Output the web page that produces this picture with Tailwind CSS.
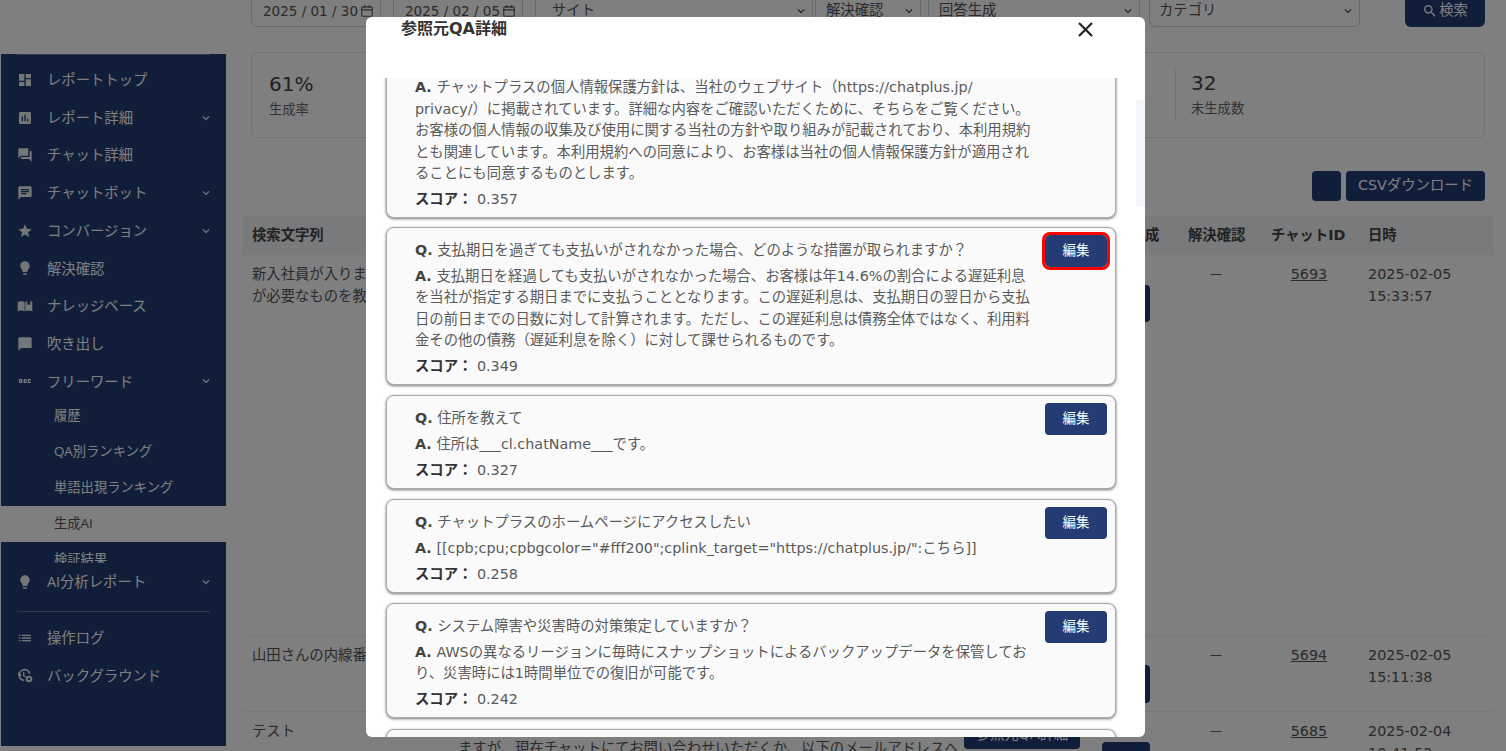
<!DOCTYPE html>
<html lang="ja">
<head>
<meta charset="utf-8">
<script src="https://cdn.jsdelivr.net/npm/@tailwindcss/browser@4"></script>
</head>
<body class="bg-white">
<div class="relative w-[1506px] h-[751px] overflow-hidden bg-white flex font-['DejaVu_Sans','Noto_Sans_CJK_JP',sans-serif] text-[14.35px] text-[#555]">

  <!-- sidebar -->
  <aside class="mt-[54px] ml-[1px] w-[225px] h-[692px] shrink-0 bg-[#203c74] text-white overflow-hidden font-['Open_Sans','Noto_Sans_CJK_JP',sans-serif]">
    <div class="h-px mx-4 bg-white/30"></div>
    <nav class="pt-[6px]">
      <div class="h-[37.7px] flex items-center pl-[16px] pr-[13px]"><svg class="w-[16px] h-[16px] fill-white/90" viewBox="0 0 24 24"><path d="M3 13h8V3H3v10zm0 8h8v-6H3v6zm10 0h8V11h-8v10zm0-18v6h8V3h-8z"/></svg><span class="ml-[14px] flex-1">レポートトップ</span></div>
      <div class="h-[37.7px] flex items-center pl-[16px] pr-[13px]"><svg class="w-[16px] h-[16px] fill-white/90" viewBox="0 0 24 24"><path d="M19 3H5c-1.1 0-2 .9-2 2v14c0 1.1.9 2 2 2h14c1.1 0 2-.9 2-2V5c0-1.1-.9-2-2-2zM9 17H7v-7h2v7zm4 0h-2V7h2v10zm4 0h-2v-4h2v4z"/></svg><span class="ml-[14px] flex-1">レポート詳細</span><svg class="w-[14px] h-[14px] fill-white" viewBox="0 0 24 24"><path d="M16.59 8.59L12 13.17 7.41 8.59 6 10l6 6 6-6z"/></svg></div>
      <div class="h-[37.7px] flex items-center pl-[16px] pr-[13px]"><svg class="w-[16px] h-[16px] fill-white/90" viewBox="0 0 24 24"><path d="M21 6h-2v9H6v2c0 .55.45 1 1 1h11l4 4V7c0-.55-.45-1-1-1zm-4 6V3c0-.55-.45-1-1-1H3c-.55 0-1 .45-1 1v14l4-4h10c.55 0 1-.45 1-1z"/></svg><span class="ml-[14px] flex-1">チャット詳細</span></div>
      <div class="h-[37.7px] flex items-center pl-[16px] pr-[13px]"><svg class="w-[16px] h-[16px] fill-white/90" viewBox="0 0 24 24"><path d="M20 2H4c-1.1 0-1.99.9-1.99 2L2 22l4-4h14c1.1 0 2-.9 2-2V4c0-1.1-.9-2-2-2zM6 9h12v2H6V9zm8 5H6v-2h8v2zm4-6H6V6h12v2z"/></svg><span class="ml-[14px] flex-1">チャットボット</span><svg class="w-[14px] h-[14px] fill-white" viewBox="0 0 24 24"><path d="M16.59 8.59L12 13.17 7.41 8.59 6 10l6 6 6-6z"/></svg></div>
      <div class="h-[37.7px] flex items-center pl-[16px] pr-[13px]"><svg class="w-[16px] h-[16px] fill-white/90" viewBox="0 0 24 24"><path d="M12 17.27L18.18 21l-1.64-7.03L22 9.24l-7.19-.61L12 2 9.19 8.63 2 9.24l5.46 4.73L5.82 21z"/></svg><span class="ml-[14px] flex-1">コンバージョン</span><svg class="w-[14px] h-[14px] fill-white" viewBox="0 0 24 24"><path d="M16.59 8.59L12 13.17 7.41 8.59 6 10l6 6 6-6z"/></svg></div>
      <div class="h-[37.7px] flex items-center pl-[16px] pr-[13px]"><svg class="w-[16px] h-[16px] fill-white/90" viewBox="0 0 24 24"><path d="M9 21c0 .55.45 1 1 1h4c.55 0 1-.45 1-1v-1H9v1zm3-19C8.14 2 5 5.14 5 9c0 2.38 1.19 4.47 3 5.74V17c0 .55.45 1 1 1h6c.55 0 1-.45 1-1v-2.26c1.81-1.27 3-3.36 3-5.74 0-3.86-3.14-7-7-7z"/></svg><span class="ml-[14px] flex-1">解決確認</span></div>
      <div class="h-[37.7px] flex items-center pl-[16px] pr-[13px]"><svg class="w-[16px] h-[16px] fill-white/90" viewBox="0 0 24 24"><path d="M1 6.5C2.5 5.4 4.5 5 6.5 5S10.500 5.400 11.500 6.500V20c-1.500-1-3.200-1.300-5-1.300-1.900 0-3.800.4-5.500 1.300zM12.500 6.500c.8-.8 1.700-1.200 3-1.500v6l2.300-1.800L20 11V3.500l3 3V20c-1.700-.9-3.600-1.300-5.500-1.300-1.800 0-3.500.3-5 1.300z"/></svg><span class="ml-[14px] flex-1">ナレッジベース</span></div>
      <div class="h-[37.7px] flex items-center pl-[16px] pr-[13px]"><svg class="w-[16px] h-[16px] fill-white/90" viewBox="0 0 24 24"><path d="M20 2H4c-1.1 0-2 .9-2 2v18l4-4h14c1.100 0 2-.9 2-2V4c0-1.100-.9-2-2-2z"/></svg><span class="ml-[14px] flex-1">吹き出し</span></div>
      <div class="h-[37.7px] flex items-center pl-[16px] pr-[13px]"><svg class="w-[16px] h-[16px] fill-white/90" viewBox="0 0 24 24"><path d="M3 9h5v6H3zM5 11v2h1v-2zM10 9h4.500v6H10zM12 11v2h1v-2zM16 9h5v2h-3v2h3v2h-5z" fill-rule="evenodd"/></svg><span class="ml-[14px] flex-1">フリーワード</span><svg class="w-[14px] h-[14px] fill-white" viewBox="0 0 24 24"><path d="M16.59 8.59L12 13.17 7.41 8.59 6 10l6 6 6-6z"/></svg></div>
    </nav>
    <div class="h-[165px] -mt-[2px] overflow-hidden text-[13.3px]">
      <div class="h-[36px] flex items-center pl-[53px]">履歴</div>
      <div class="h-[36px] flex items-center pl-[53px]">QA別ランキング</div>
      <div class="h-[36px] flex items-center pl-[53px]">単語出現ランキング</div>
      <div class="h-[36px] flex items-center pl-[53px] bg-white text-[#555]">生成AI</div>
      <div class="h-[36px] flex items-center pl-[53px]">検証結果</div>
    </div>
    <div class="h-[37.7px] flex items-center pl-[16px] pr-[13px]"><svg class="w-[16px] h-[16px] fill-white/90" viewBox="0 0 24 24"><path d="M9 21c0 .55.45 1 1 1h4c.55 0 1-.45 1-1v-1H9v1zm3-19C8.14 2 5 5.14 5 9c0 2.38 1.19 4.47 3 5.74V17c0 .55.45 1 1 1h6c.55 0 1-.45 1-1v-2.26c1.81-1.27 3-3.36 3-5.74 0-3.86-3.14-7-7-7z"/></svg><span class="ml-[14px] flex-1">AI分析レポート</span><svg class="w-[14px] h-[14px] fill-white" viewBox="0 0 24 24"><path d="M16.59 8.59L12 13.17 7.41 8.59 6 10l6 6 6-6z"/></svg></div>
    <div class="h-px mx-4 mt-[10px] bg-white/30"></div>
    <div class="mt-[7px] h-[37.7px] flex items-center pl-[16px] pr-[13px]"><svg class="w-[16px] h-[16px] fill-white/90" viewBox="0 0 24 24"><path d="M3 13h2v-2H3v2zm0 4h2v-2H3v2zm0-8h2V7H3v2zm4 4h14v-2H7v2zm0 4h14v-2H7v2zM7 7v2h14V7H7z"/></svg><span class="ml-[14px] flex-1">操作ログ</span></div>
    <div class="h-[37.7px] flex items-center pl-[16px] pr-[13px]"><svg class="w-[16px] h-[16px]" viewBox="0 0 24 24"><path d="M19 10A8 8 0 1 0 11 20" fill="none" stroke="rgb(255 255 255 / .9)" stroke-width="2.500"/><path d="M2 7V13H8z" class="fill-white/90"/><path d="M10 7v6l3 2" fill="none" stroke="rgb(255 255 255 / .9)" stroke-width="2"/><circle cx="18" cy="18" r="3.500" fill="none" stroke="rgb(255 255 255 / .9)" stroke-width="3"/></svg><span class="ml-[14px] flex-1">バックグラウンド</span></div>
  </aside>

  <!-- main -->
  <main class="ml-[17px] w-[1250px] shrink-0">
    <div class="h-[27px] overflow-hidden">
      <div class="-mt-[5px] h-[32px] ml-[8px] flex">
        <div class="w-[130px] h-full border border-[#ced4da] rounded-md flex items-center pl-[11px] pr-[6px] justify-between text-[13.5px]"><span>2025 / 01 / 30</span><svg class="w-[14px] h-[14px] fill-none stroke-[#555] stroke-2" viewBox="0 0 24 24"><rect x="3" y="5" width="18" height="16" rx="2"/><path d="M3 10h18M8 2v5M16 2v5"/></svg></div>
        <div class="w-[130px] ml-[12px] h-full border border-[#ced4da] rounded-md flex items-center pl-[11px] pr-[6px] justify-between text-[13.5px]"><span>2025 / 02 / 05</span><svg class="w-[14px] h-[14px] fill-none stroke-[#555] stroke-2" viewBox="0 0 24 24"><rect x="3" y="5" width="18" height="16" rx="2"/><path d="M3 10h18M8 2v5M16 2v5"/></svg></div>
        <div class="w-[278px] ml-[12px] h-full border border-[#ced4da] rounded-md flex items-center pl-[16px] pr-[4px] justify-between"><span>サイト</span><svg class="w-[14px] h-[14px] fill-[#333]" viewBox="0 0 24 24"><path d="M16.59 8.59L12 13.17 7.41 8.59 6 10l6 6 6-6z"/></svg></div>
        <div class="w-[106px] ml-[2px] h-full border border-[#ced4da] rounded-md flex items-center pl-[10px] pr-[4px] justify-between"><span>解決確認</span><svg class="w-[14px] h-[14px] fill-[#333]" viewBox="0 0 24 24"><path d="M16.59 8.59L12 13.17 7.41 8.59 6 10l6 6 6-6z"/></svg></div>
        <div class="w-[212px] ml-[7px] h-full border border-[#ced4da] rounded-md flex items-center pl-[10px] pr-[4px] justify-between"><span>回答生成</span><svg class="w-[14px] h-[14px] fill-[#333]" viewBox="0 0 24 24"><path d="M16.59 8.59L12 13.17 7.41 8.59 6 10l6 6 6-6z"/></svg></div>
        <div class="w-[211px] ml-[9px] h-full border border-[#ced4da] rounded-md flex items-center pl-[9px] pr-[4px] justify-between"><span>カテゴリ</span><svg class="w-[14px] h-[14px] fill-[#333]" viewBox="0 0 24 24"><path d="M16.59 8.59L12 13.17 7.41 8.59 6 10l6 6 6-6z"/></svg></div>
        <div class="w-[80px] ml-[45px] h-full bg-[#203c74] rounded-md flex items-center justify-center text-white"><svg class="w-[16px] h-[16px] fill-white" viewBox="0 0 24 24"><path d="M15.5 14h-.79l-.28-.27C15.41 12.59 16 11.11 16 9.5 16 5.91 13.09 3 9.5 3S3 5.91 3 9.5 5.91 16 9.5 16c1.61 0 3.09-.59 4.23-1.57l.27.28v.79l5 4.99L20.49 19l-4.99-5zm-6 0C7.01 14 5 11.99 5 9.5S7.01 5 9.5 5 14 7.01 14 9.500 11.990 14 9.500 14z"/></svg><span class="ml-[1px]">検索</span></div>
      </div>
    </div>

    <section class="mt-[25px] ml-[8px] w-[1234px] h-[86px] border border-[#e4e6ea] rounded-md flex items-center justify-between">
      <div class="pl-[17px]">
        <div class="text-[20px] leading-[28px] text-[#444]">61%</div>
        <div class="mt-[2px] text-[13.3px] leading-[20px] text-[#666]">生成率</div>
      </div>
      <div class="w-[309px] h-[53px] border-l border-[#e4e6ea] pl-[15px]">
        <div class="text-[20px] leading-[28px] text-[#444]">32</div>
        <div class="mt-[2px] text-[13.3px] leading-[20px] text-[#666]">未生成数</div>
      </div>
    </section>

    <div class="mt-[33px] w-[1242px] h-[30px] flex justify-end gap-[5px]">
      <div class="w-[29px] h-full bg-[#203c74] rounded-[4px]"></div>
      <div class="w-[139px] h-full bg-[#203c74] rounded-[4px] text-white flex items-center justify-center">CSVダウンロード</div>
    </div>

    <section class="mt-[15px] w-[1250px]">
      <div class="h-[39px] bg-[#f3f4f7] pl-[9px] grid grid-cols-[206px_506px_138px_86px_83px_97px_1fr] items-center font-bold text-[#444]">
        <div>検索文字列</div><div></div><div></div><div>回答生成</div><div>解決確認</div><div>チャットID</div><div>日時</div>
      </div>
      <div class="h-[381px] border-b border-[#eee] pl-[9px] grid grid-cols-[206px_506px_138px_86px_83px_97px_1fr] leading-[21.500px] pt-[9px]">
        <div>新入社員が入りますが、入社に<br>が必要なものを教えてください</div><div></div><div></div>
        <div class="pt-[21px]"><div class="w-[48px] h-[37px] bg-[#203c74] rounded-[4px]"></div></div>
        <div class="w-[56px] text-center text-[12px]">—</div>
        <div class="w-[76px] text-center underline">5693</div>
        <div>2025-02-05<br>15:33:57</div>
      </div>
      <div class="h-[76px] border-b border-[#eee] pl-[9px] grid grid-cols-[206px_506px_138px_86px_83px_97px_1fr] leading-[21.500px] pt-[9px]">
        <div class="whitespace-nowrap">山田さんの内線番号を教えて</div><div></div><div></div>
        <div class="pt-[20px]"><div class="w-[48px] h-[38px] bg-[#203c74] rounded-[4px]"></div></div>
        <div class="w-[56px] text-center text-[12px]">—</div>
        <div class="w-[76px] text-center underline">5694</div>
        <div>2025-02-05<br>15:11:38</div>
      </div>
      <div class="h-[60px] pl-[9px] grid grid-cols-[206px_506px_138px_86px_83px_97px_1fr] leading-[21.500px] pt-[9px]">
        <div>テスト</div>
        <div class="whitespace-nowrap overflow-hidden -mt-[5px]">お問い合わせの内容については確認が必要となり<br>ますが、現在チャットにてお問い合わせいただくか、以下のメールアドレスへ</div>
        <div><div class="w-[116px] h-[30px] -mt-[2px] bg-[#203c74] rounded-[4px] text-white text-center leading-[30px]">参照元QA詳細</div></div>
        <div class="pt-[21px]"><div class="w-[48px] h-[38px] bg-[#203c74] rounded-[4px]"></div></div>
        <div class="w-[56px] text-center text-[12px]">—</div>
        <div class="w-[76px] text-center underline">5685</div>
        <div>2025-02-04<br>10:41:52</div>
      </div>
    </section>
  </main>

  <!-- overlay -->
  <div class="absolute inset-0 bg-black/50"></div>

  <!-- modal -->
  <div class="absolute left-[366px] top-[17px] w-[779px] h-[720px] bg-white rounded-md flex flex-col overflow-hidden">
    <header class="h-[61px] shrink-0 flex justify-between items-start pl-[35px] pr-[52px]">
      <h2 class="text-[16px] leading-[24px] font-bold text-[#333]">参照元QA詳細</h2>
      <svg class="w-[15px] h-[15px] mt-[5px] stroke-[#222] stroke-[2.200] fill-none" viewBox="0 0 15 15"><path d="M1 1l13 13M14 1L1 14"/></svg>
    </header>
    <div class="absolute right-0 top-[83px] w-[9px] h-[106px] bg-[#f3f6fb]"></div>
    <div class="flex-1 overflow-hidden pl-[20px] pr-[29px] leading-[21.500px] text-[#5a5a5a]">
      <div class="-mt-[40px] flex flex-col gap-[10px]">

        <article class="-mb-[1px] border border-[#aaa] rounded-lg bg-[#fafafa] shadow-[0_1px_3px_rgba(0,0,0,0.55)] pl-[28px] pr-[8px] pt-[12px] pb-[6.250px]">
          <p><b class="text-[#444]">Q.</b> 個人情報の取り扱いについて教えてください</p>
          <p class="mt-[4.500px]"><b class="text-[#444]">A.</b> チャットプラスの個人情報保護方針は、当社のウェブサイト（https://chatplus.jp/<br>privacy/）に掲載されています。詳細な内容をご確認いただくために、そちらをご覧ください。<br>お客様の個人情報の収集及び使用に関する当社の方針や取り組みが記載されており、本利用規約<br>とも関連しています。本利用規約への同意により、お客様は当社の個人情報保護方針が適用され<br>ることにも同意するものとします。</p>
          <p class="mt-[4.500px]"><b class="text-[#333]">スコア：</b> <span>0.357</span></p>
        </article>

        <article class="border border-[#aaa] rounded-lg bg-[#fafafa] shadow-[0_1px_3px_rgba(0,0,0,0.55)] pl-[28px] pr-[8px] pt-[12px] pb-[6.250px] flex justify-between items-start">
          <div>
            <p><b class="text-[#444]">Q.</b> 支払期日を過ぎても支払いがされなかった場合、どのような措置が取られますか？</p>
            <p class="mt-[4.500px]"><b class="text-[#444]">A.</b> 支払期日を経過しても支払いがされなかった場合、お客様は年14.6%の割合による遅延利息<br>を当社が指定する期日までに支払うこととなります。この遅延利息は、支払期日の翌日から支払<br>日の前日までの日数に対して計算されます。ただし、この遅延利息は債務全体ではなく、利用料<br>金その他の債務（遅延利息を除く）に対して課せられるものです。</p>
            <p class="mt-[4.500px]"><b class="text-[#333]">スコア：</b> <span>0.349</span></p>
          </div>
          <div class="-mt-[5px] w-[62px] h-[32px] bg-[#243c73] rounded-[5px] text-white text-[13.5px] flex items-center justify-center outline-[3px] outline-[#f00]">編集</div>
        </article>

        <article class="border border-[#aaa] rounded-lg bg-[#fafafa] shadow-[0_1px_3px_rgba(0,0,0,0.55)] pl-[28px] pr-[8px] pt-[12px] pb-[6.250px] flex justify-between items-start">
          <div>
            <p><b class="text-[#444]">Q.</b> 住所を教えて</p>
            <p class="mt-[4.500px]"><b class="text-[#444]">A.</b> 住所は___cl.chatName___です。</p>
            <p class="mt-[4.500px]"><b class="text-[#333]">スコア：</b> <span>0.327</span></p>
          </div>
          <div class="-mt-[5px] w-[62px] h-[32px] bg-[#243c73] rounded-[4px] text-white text-[13.5px] flex items-center justify-center">編集</div>
        </article>

        <article class="border border-[#aaa] rounded-lg bg-[#fafafa] shadow-[0_1px_3px_rgba(0,0,0,0.55)] pl-[28px] pr-[8px] pt-[12px] pb-[6.250px] flex justify-between items-start">
          <div>
            <p><b class="text-[#444]">Q.</b> チャットプラスのホームページにアクセスしたい</p>
            <p class="mt-[4.500px]"><b class="text-[#444]">A.</b> [[cpb;cpu;cpbgcolor="#fff200";cplink_target="https://chatplus.jp/":こちら]]</p>
            <p class="mt-[4.500px]"><b class="text-[#333]">スコア：</b> <span>0.258</span></p>
          </div>
          <div class="-mt-[5px] w-[62px] h-[32px] bg-[#243c73] rounded-[4px] text-white text-[13.5px] flex items-center justify-center">編集</div>
        </article>

        <article class="mb-[1px] border border-[#aaa] rounded-lg bg-[#fafafa] shadow-[0_1px_3px_rgba(0,0,0,0.55)] pl-[28px] pr-[8px] pt-[12px] pb-[6.250px] flex justify-between items-start">
          <div>
            <p><b class="text-[#444]">Q.</b> システム障害や災害時の対策策定していますか？</p>
            <p class="mt-[4.500px]"><b class="text-[#444]">A.</b> AWSの異なるリージョンに毎時にスナップショットによるバックアップデータを保管してお<br>り、災害時には1時間単位での復旧が可能です。</p>
            <p class="mt-[4.500px]"><b class="text-[#333]">スコア：</b> <span>0.242</span></p>
          </div>
          <div class="-mt-[5px] w-[62px] h-[32px] bg-[#243c73] rounded-[4px] text-white text-[13.5px] flex items-center justify-center">編集</div>
        </article>

        <article class="border border-[#aaa] rounded-lg bg-[#fafafa] shadow-[0_1px_3px_rgba(0,0,0,0.55)] pl-[28px] pr-[8px] pt-[12px] pb-[6.250px]">
          <p><b class="text-[#444]">Q.</b> 営業時間を教えてください</p>
        </article>
      </div>
    </div>
  </div>
</div>
</body>
</html>
